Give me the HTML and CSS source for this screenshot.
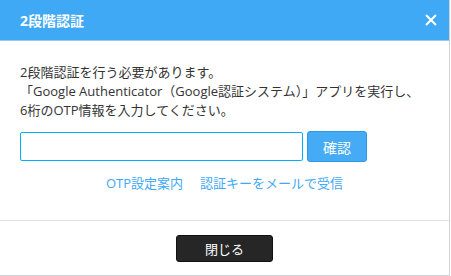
FILE: index.html
```html
<!DOCTYPE html>
<html lang="ja">
<head>
<meta charset="utf-8">
<link rel="stylesheet" href="styles.css">
</head>
<body>
<div class="dialog">
  <div class="header">
    <span class="title">2段階認証</span>
    <span class="close" aria-label="閉じる">
      <svg width="12" height="12" viewBox="0 0 12 12"><path d="M1 1 L11 11 M11 1 L1 11" stroke="#fff" stroke-width="2" fill="none"/></svg>
    </span>
  </div>
  <div class="body">
    <p class="msg">2段階認証を行う必要があります。<br>「Google Authenticator（Google認証システム）」アプリを実行し、<br>6桁のOTP情報を入力してください。</p>
    <div class="form-row">
      <input class="otp" type="text">
      <button class="confirm">確認</button>
    </div>
    <div class="links">
      <a class="link">OTP設定案内</a>
      <a class="link">認証キーをメールで受信</a>
    </div>
  </div>
  <div class="footer">
    <button class="close-btn">閉じる</button>
  </div>
</div>
</body>
</html>
```
FILE: styles.css
```css
html, body {
  margin: 0;
  padding: 0;
  background: #fff;
}
body {
  font-family: "Open Sans", "Noto Sans CJK JP", sans-serif;
  color: #333;
}
.dialog {
  width: 449px;
  height: 275px;
  border-right: 1px solid #cfd2d8;
  border-bottom: 1px solid #cfd2d8;
  display: flex;
  flex-direction: column;
  background: #fff;
}
.header {
  height: 40px;
  background: #3fa9f5;
  border-bottom: 1px solid #8fcaf3;
  display: flex;
  align-items: center;
  justify-content: space-between;
  padding: 0 12px 0 20px;
  flex-shrink: 0;
}
.title {
  color: #fff;
  font-weight: bold;
  font-size: 14px;
  line-height: 20px;
  margin-top: 2px;
}
.close {
  display: flex;
  width: 12px;
  height: 12px;
  margin-top: -1px;
}
.body {
  padding: 22px 20px 0 20px;
  height: 157px;
  border-bottom: 1px solid #dfe1e8;
  flex-shrink: 0;
}
.msg {
  margin: 0;
  font-size: 13px;
  line-height: 19px;
}
.form-row {
  display: flex;
  align-items: center;
  gap: 4px;
  margin-top: 11px;
}
.otp {
  width: 283px;
  height: 29px;
  box-sizing: border-box;
  border: 1px solid #00aeff;
  border-radius: 2px;
  padding: 0 6px;
  margin: 0;
  outline: none;
}
.confirm {
  width: 60px;
  height: 31px;
  box-sizing: border-box;
  background: #45abf4;
  border: 1px solid #2f98e2;
  border-radius: 3px;
  color: #fff;
  font-family: inherit;
  font-size: 14px;
  padding: 0;
  margin: 0;
}
.links {
  display: flex;
  justify-content: center;
  gap: 17px;
  margin-top: 12px;
  font-size: 13px;
  line-height: 19px;
}
.link {
  color: #3fa9f5;
  text-decoration: none;
}
.footer {
  flex: 1;
  display: flex;
  justify-content: center;
  padding-top: 14px;
}
.close-btn {
  width: 97px;
  height: 27px;
  background: #262626;
  border: 1px solid #111;
  border-radius: 3px;
  color: #fff;
  font-family: inherit;
  font-size: 13px;
  padding: 0;
  margin: 0;
}
```
